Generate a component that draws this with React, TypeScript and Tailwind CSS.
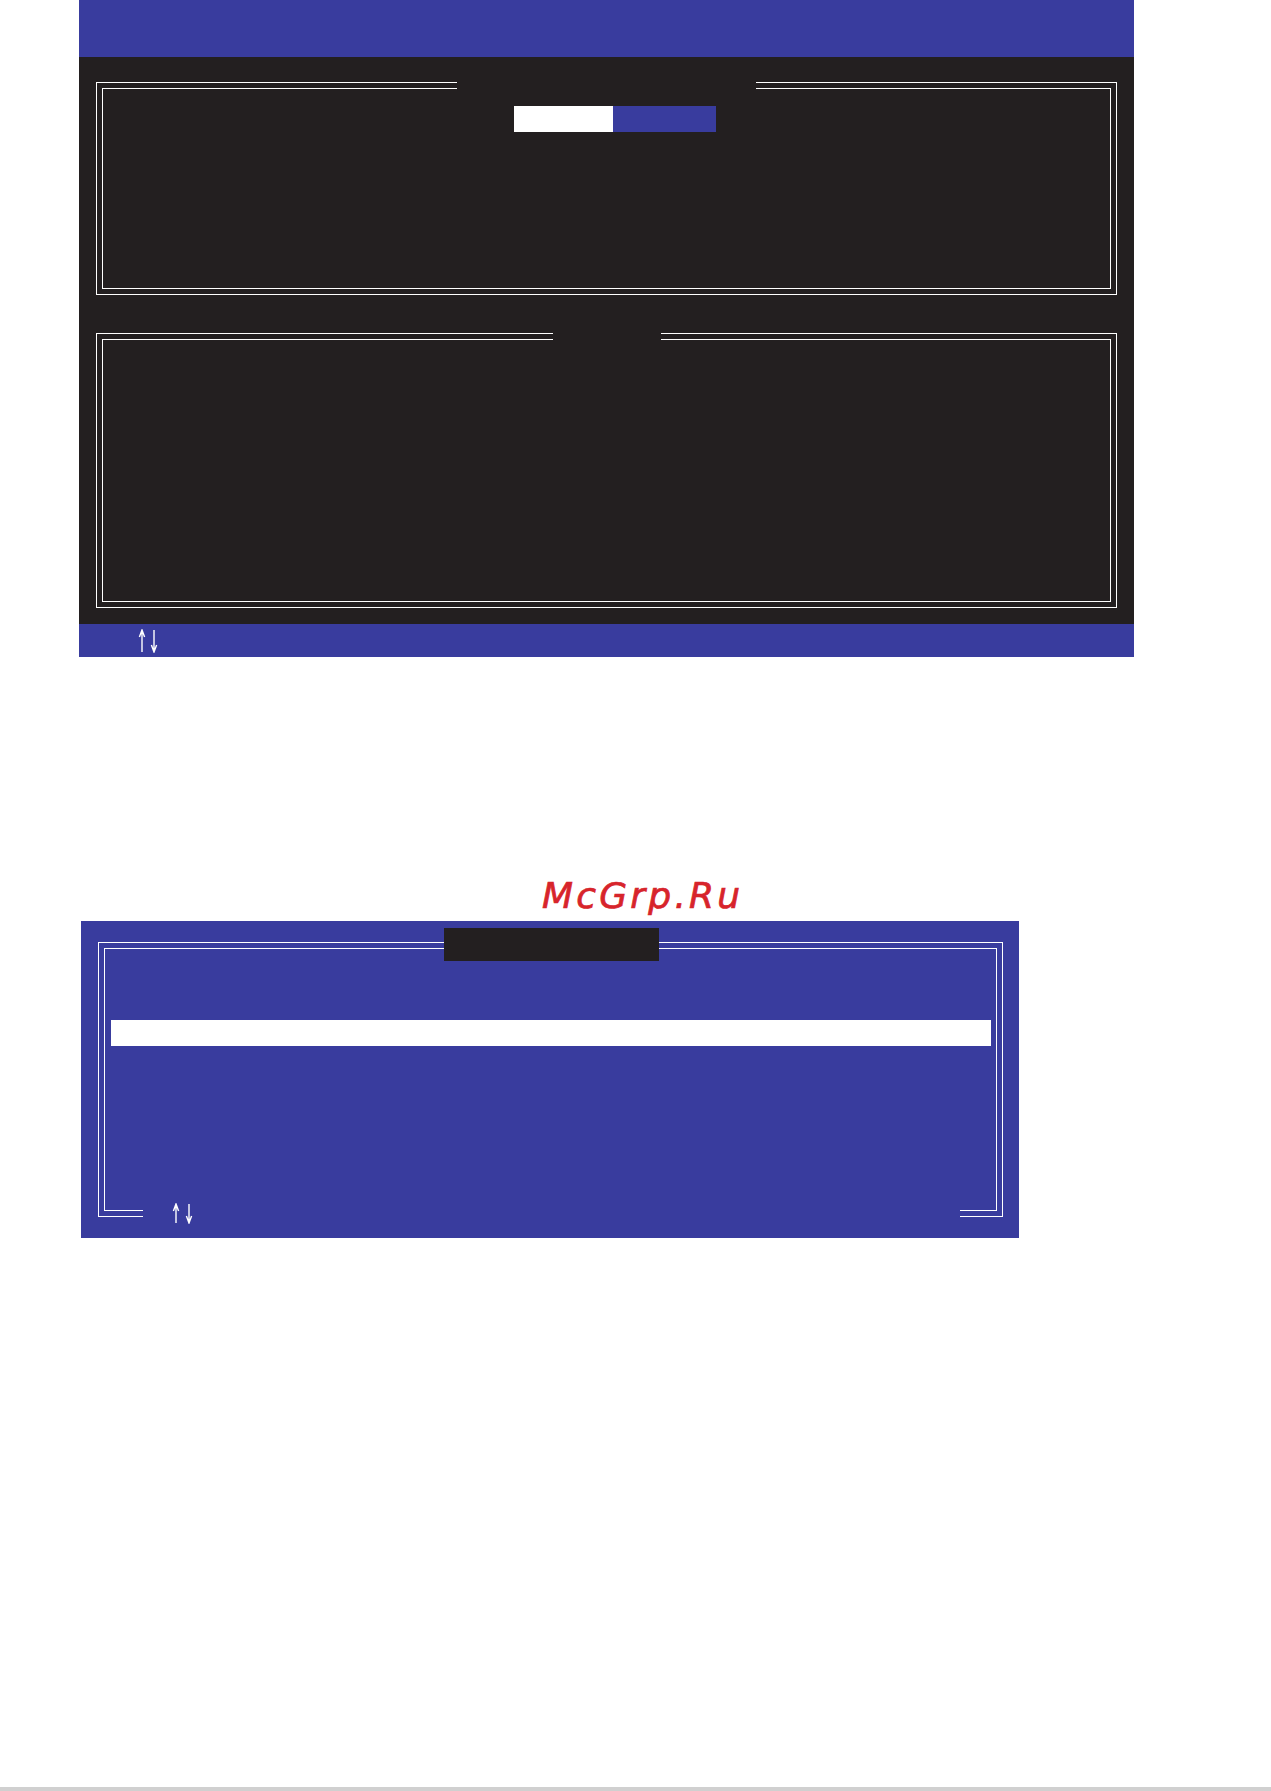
import React from "react";

const BLUE = "bg-[#393c9e]";

function UpDownArrows({ h = 24, gap = 12 }: { h?: number; gap?: number }) {
  // Thin up/down navigation arrows used in the BIOS key legend
  const x2 = 5 + gap;
  return (
    <svg width={x2 + 4} height={h} viewBox={`0 0 ${x2 + 4} ${h}`} fill="none" stroke="white" strokeWidth="1.4">
      <path d={`M5 ${h - 1} V1.5 M2.4 8 L5 1 L7.6 8`} />
      <path d={`M${x2} 1 V${h - 1.5} M${x2 - 2.6} ${h - 8} L${x2} ${h - 1} L${x2 + 2.6} ${h - 8}`} />
    </svg>
  );
}

function DoubleFrame({
  height,
  gapLeft,
  gapWidth,
  children,
}: {
  height: number;
  gapLeft: number;
  gapWidth: number;
  children?: React.ReactNode;
}) {
  return (
    <div className="relative border border-white p-[5px]" style={{ height }}>
      <div className="h-full border border-white">{children}</div>
      {/* title slot breaks the top edge of both lines */}
      <div
        className="absolute top-[-1px] h-[8px] bg-[#231f20]"
        style={{ left: gapLeft, width: gapWidth }}
      />
    </div>
  );
}

export default function App() {
  return (
    <div className="relative flex h-[1791px] w-full flex-col bg-white font-['DejaVu_Sans',sans-serif]">
      {/* Main setup screen */}
      <div className="ml-[79px] w-[1055px]">
        <div className={`h-[57px] ${BLUE}`} />
        <div className="flex h-[567px] flex-col bg-[#231f20] px-[17px] pt-[25px]">
          <DoubleFrame height={213} gapLeft={360} gapWidth={299}>
            <div className="ml-[411px] mt-[17px] flex h-[26px]">
              <div className="w-[99px] bg-white" />
              <div className={`w-[103px] ${BLUE}`} />
            </div>
          </DoubleFrame>
          <div className="mt-[38px]">
            <DoubleFrame height={275} gapLeft={456} gapWidth={108} />
          </div>
        </div>
        <div className={`flex h-[33px] items-center pl-[58px] ${BLUE}`}>
          <UpDownArrows h={24} gap={12} />
        </div>
      </div>

      {/* Site mark */}
      <div className="ml-[542px] mt-[221px] h-[36px] text-[36px] leading-none italic tracking-[3.2px] text-[#d7242b] [-webkit-text-stroke:0.7px_#d7242b]">
        McGrp.Ru
      </div>

      {/* Pop-up dialog screen */}
      <div className={`ml-[81px] mt-[7px] h-[317px] w-[938px] px-[16px] pl-[17px] pt-[21px] ${BLUE}`}>
        <div className="relative h-[275px] border border-white p-[5px]">
          <div className="h-full border border-white pt-[71px]">
            <div className="ml-[6px] mr-[5px] h-[26px] bg-white" />
          </div>
          {/* dialog title block */}
          <div className="absolute left-[345px] top-[-15px] h-[33px] w-[215px] bg-[#231f20]" />
          {/* key legend slot on the bottom edge */}
          <div className={`absolute bottom-[-8px] left-[44px] flex h-[22px] w-[817px] items-center pl-[28px] ${BLUE}`}>
            <UpDownArrows h={21} gap={13} />
          </div>
        </div>
      </div>

      <div className="mt-auto h-[4px] w-full bg-[#d0d0d0]" />
    </div>
  );
}
